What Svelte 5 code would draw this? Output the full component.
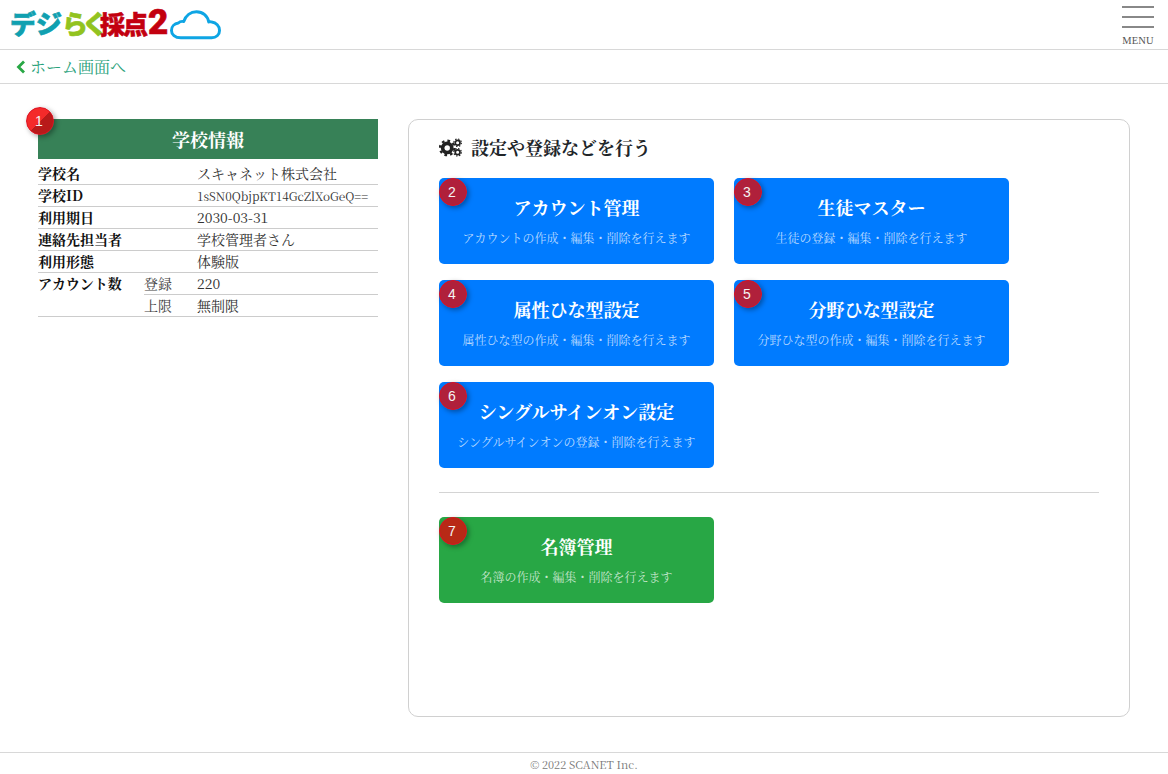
<script>
  const schoolRows = [
    { label: "学校名", value: "スキャネット株式会社" },
    { label: "学校ID", value: "1sSN0QbjpKT14GcZlXoGeQ==", small: true },
    { label: "利用期日", value: "2030-03-31" },
    { label: "連絡先担当者", value: "学校管理者さん" },
    { label: "利用形態", value: "体験版" },
  ];

  const settings = [
    { n: 2, title: "アカウント管理", desc: "アカウントの作成・編集・削除を行えます" },
    { n: 3, title: "生徒マスター", desc: "生徒の登録・編集・削除を行えます" },
    { n: 4, title: "属性ひな型設定", desc: "属性ひな型の作成・編集・削除を行えます" },
    { n: 5, title: "分野ひな型設定", desc: "分野ひな型の作成・編集・削除を行えます" },
    { n: 6, title: "シングルサインオン設定", desc: "シングルサインオンの登録・削除を行えます" },
  ];
</script>

<div class="page">
  <header class="header">
    <div class="logo">
      <span class="logo-text"><span class="teal">デジ</span><span class="lime">らく</span><span class="red">採点</span><span class="red two">2</span></span>
      <svg class="cloud" viewBox="0 0 52 30" width="51" height="30" aria-hidden="true">
        <path d="M11 28 C5 28 1.500 24.500 1.500 20.500 C1.500 16.500 4.500 13.500 8.500 13 C10 11.500 12 11 14 11.500 C16 5.500 21 1.500 27 1.500 C33.500 1.500 38.500 6 39.500 12 C40.500 11.500 41.500 11.500 42.500 12 C47 12.500 50.500 16 50.500 20.500 C50.500 25 47 28 42.500 28 Z" fill="none" stroke="#0ea5e4" stroke-width="3" stroke-linejoin="round"/>
      </svg>
    </div>
    <button class="menu" aria-label="Menu">
      <span class="bar"></span>
      <span class="bar"></span>
      <span class="bar"></span>
      <span class="menu-label">MENU</span>
    </button>
  </header>

  <nav class="crumb">
    <svg class="chevron" viewBox="0 0 10 14" width="10" height="14" aria-hidden="true">
      <path d="M8 1.500 L2.500 7 L8 12.500" fill="none" stroke="#28a745" stroke-width="2.800"/>
    </svg>
    <span>ホーム画面へ</span>
  </nav>

  <main class="main">
    <section class="school">
      <span class="badge first">1</span>
      <h2 class="school-title">学校情報</h2>
      <div class="rows">
        {#each schoolRows as row}
          <div class="row">
            <span class="label">{row.label}</span>
            <span class="value" class:small={row.small}>{row.value}</span>
          </div>
        {/each}
        <div class="row nested">
          <span class="label">アカウント数</span>
          <div class="sub-rows">
            <div class="sub-row"><span class="sub-label">登録</span><span class="sub-value">220</span></div>
            <div class="sub-row"><span class="sub-label">上限</span><span class="sub-value">無制限</span></div>
          </div>
        </div>
      </div>
    </section>

    <section class="panel">
      <h3 class="panel-title">
        <svg class="gears" viewBox="0 0 24 20" width="23" height="19" aria-hidden="true">
          <circle cx="8.500" cy="10.500" r="4.800" fill="none" stroke="#222" stroke-width="3.800"/>
          <circle cx="8.500" cy="10.500" r="7.600" fill="none" stroke="#222" stroke-width="2.400" stroke-dasharray="2.800 3.170"/>
          <circle cx="19.500" cy="5" r="2.500" fill="none" stroke="#222" stroke-width="1.800"/>
          <circle cx="19.500" cy="5" r="4" fill="none" stroke="#222" stroke-width="1.200" stroke-dasharray="1.500 1.640"/>
          <circle cx="19.500" cy="15" r="2.500" fill="none" stroke="#222" stroke-width="1.800"/>
          <circle cx="19.500" cy="15" r="4" fill="none" stroke="#222" stroke-width="1.200" stroke-dasharray="1.500 1.640"/>
        </svg>
        設定や登録などを行う
      </h3>
      <div class="cards">
        {#each settings as card}
          <button class="card">
            <span class="badge">{card.n}</span>
            <span class="card-title">{card.title}</span>
            <span class="card-desc">{card.desc}</span>
          </button>
        {/each}
      </div>
      <hr class="divider" />
      <div class="cards">
        <button class="card green">
          <span class="badge">7</span>
          <span class="card-title">名簿管理</span>
          <span class="card-desc">名簿の作成・編集・削除を行えます</span>
        </button>
      </div>
    </section>
  </main>

  <footer class="footer">© 2022 SCANET Inc.</footer>
</div>

<style>
  :global(body) {
    margin: 0;
    background: #fff;
  }

  .page {
    height: 774px;
    display: flex;
    flex-direction: column;
    font-family: "Noto Serif CJK JP", "Liberation Serif", serif;
    font-size: 14px;
    color: #212529;
    overflow: hidden;
  }

  .header {
    height: 49px;
    flex-shrink: 0;
    display: flex;
    align-items: center;
    justify-content: space-between;
    padding: 0 14px 0 10px;
    border-bottom: 1px solid #d8d8d8;
  }
  .logo {
    display: flex;
    align-items: center;
    gap: 2px;
    margin-top: 1px;
  }
  .logo-text {
    display: flex;
    align-items: baseline;
    margin-bottom: 4px;
    font-family: "Noto Sans CJK JP", "Noto Sans", sans-serif;
    font-weight: 900;
    font-size: 26px;
    line-height: 34px;
    white-space: nowrap;
    -webkit-text-stroke: 0.6px currentColor;
  }
  .teal { color: #10a0b0; }
  .lime { color: #92c31f; letter-spacing: -6px; margin-right: -2px; }
  .red { color: #c3000f; letter-spacing: -2px; font-size: 25px; }
  .two {
    margin-left: 2px;
    font-family: Roboto, sans-serif;
    font-size: 35px;
    letter-spacing: 0;
  }
  .cloud { display: block; }

  .menu {
    width: 32px;
    display: flex;
    flex-direction: column;
    align-items: center;
    padding: 0;
    margin-top: 3px;
    background: none;
    border: none;
    font-family: "Liberation Serif", serif;
  }
  .bar {
    width: 32px;
    height: 2px;
    margin-bottom: 8px;
    background: #888;
  }
  .menu-label {
    margin-top: -1px;
    font-size: 10.500px;
    line-height: 12px;
    letter-spacing: 0.2px;
    color: #555;
  }

  .crumb {
    height: 33px;
    flex-shrink: 0;
    display: flex;
    align-items: center;
    gap: 4px;
    padding-left: 16px;
    border-bottom: 1px solid #d8d8d8;
    font-size: 16px;
    color: #28a17a;
  }
  .chevron { display: block; }

  .main {
    flex: 1;
    display: flex;
    align-items: flex-start;
    gap: 30px;
    padding: 35px 38px 35px 38px;
    min-height: 0;
  }

  .school {
    position: relative;
    width: 340px;
    flex-shrink: 0;
  }
  .school-title {
    margin: 0;
    height: 40px;
    line-height: 40px;
    text-align: center;
    font-size: 18px;
    font-weight: 700;
    color: #fff;
    background: #378157;
  }
  .rows {
    padding-top: 4px;
  }
  .row {
    display: flex;
    min-height: 21px;
    border-bottom: 1px solid #ccc;
    line-height: 21px;
  }
  .row .label {
    width: 159px;
    flex-shrink: 0;
    font-weight: 700;
    color: #111;
  }
  .value {
    color: #333;
  }
  .value.small {
    font-size: 11.850px;
  }
  .row.nested .label {
    width: 106px;
  }
  .sub-rows {
    flex: 1;
  }
  .sub-row {
    display: flex;
    height: 21px;
  }
  .sub-row + .sub-row {
    border-top: 1px solid #ccc;
  }
  .sub-label {
    width: 53px;
    color: #444;
  }
  .sub-value {
    color: #333;
  }

  .panel {
    flex: 1;
    align-self: stretch;
    padding: 14px 30px 0;
    border: 1px solid #d0d0d0;
    border-radius: 10px;
  }
  .panel-title {
    display: flex;
    align-items: center;
    gap: 9px;
    margin: 0 0 18px;
    height: 26px;
    font-size: 18px;
    font-weight: 700;
    color: #212529;
  }
  .gears { display: block; }

  .cards {
    display: grid;
    grid-template-columns: 275px 275px;
    gap: 16px 20px;
  }
  .card {
    position: relative;
    height: 86px;
    display: flex;
    flex-direction: column;
    align-items: center;
    padding: 17px 0 0;
    background: #007bff;
    border: none;
    border-radius: 5px;
    color: #fff;
    font-family: inherit;
  }
  .card.green {
    background: #28a745;
  }
  .card-title {
    font-size: 18px;
    line-height: 24px;
    font-weight: 700;
  }
  .card-desc {
    margin-top: 10px;
    font-size: 12px;
    line-height: 18px;
    color: rgba(255, 255, 255, 0.72);
  }

  .divider {
    margin: 24px 0;
    border: none;
    border-top: 1px solid #d4d4d4;
  }

  .badge {
    position: absolute;
    left: 0;
    top: 0;
    width: 28px;
    height: 28px;
    display: flex;
    align-items: center;
    justify-content: center;
    padding-right: 2px;
    border-radius: 50%;
    background: rgba(220, 10, 10, 0.8);
    border: 1px solid #dd1020;
    box-sizing: border-box;
    box-shadow: 2px 2px 5px rgba(0, 0, 0, 0.35);
    color: #f4f4f4;
    font-family: "Liberation Sans", Arial, sans-serif;
    font-size: 14px;
    line-height: 1;
  }
  .badge.first {
    left: -12px;
    top: -12px;
    background: linear-gradient(135deg, #f42a2a 0 50%, #b81a1a 50% 100%);
    z-index: 1;
  }

  .footer {
    height: 21px;
    flex-shrink: 0;
    border-top: 1px solid #d8d8d8;
    text-align: center;
    font-size: 11px;
    line-height: 22px;
    color: #777;
  }
</style>
